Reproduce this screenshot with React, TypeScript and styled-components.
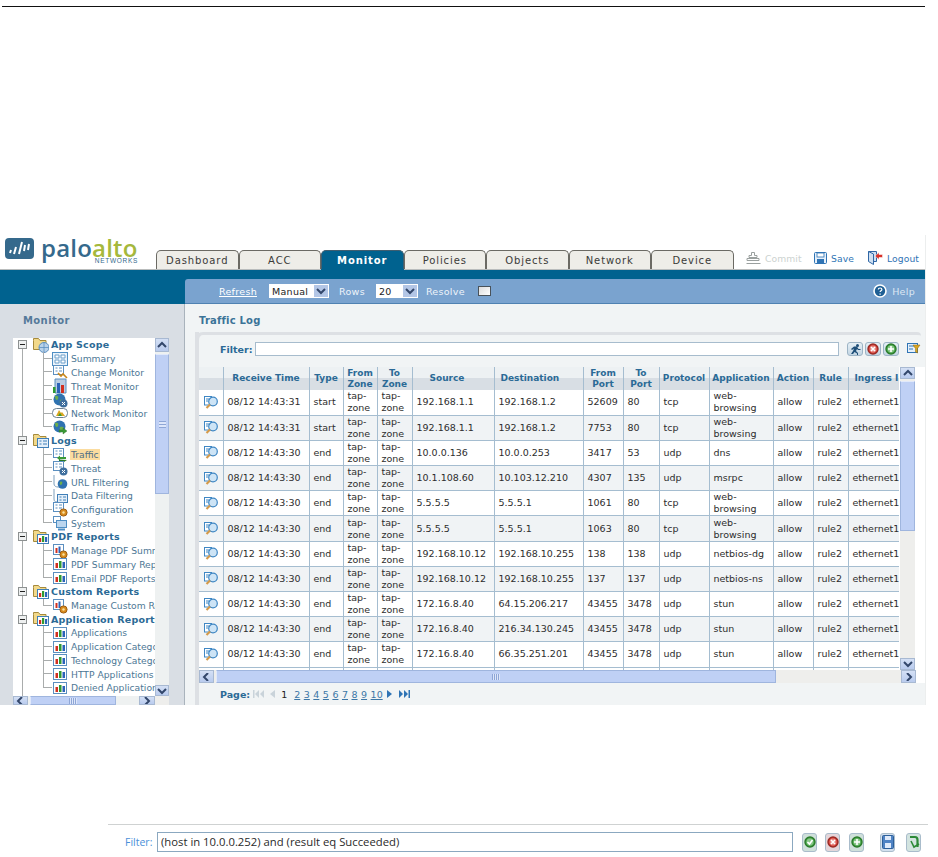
import React from 'react';
import styled, { createGlobalStyle } from 'styled-components';

const GlobalStyle = createGlobalStyle`
    html, body {
        margin: 0;
        padding: 0;
        background: #fff;
        font-family: "DejaVu Sans", Verdana, sans-serif;
    }
    #root { width: 938px; height: 857px; overflow: hidden; }
    * { box-sizing: border-box; }
`;

const Page = styled.div`
    display: flex;
    flex-direction: column;
    width: 938px;
`;

const TopRule = styled.div`
    margin: 6px 13px 0 2px;
    border-top: 1px solid #111;
`;

const Console = styled.div`
    margin-top: 228px;
    width: 926px;
    height: 470px;
    border-right: 1px solid #eceeee;
    overflow: hidden;
`;

const Masthead = styled.div`
    display: flex;
    height: 35px;
    border-bottom: 1px solid #b9bcbc;
`;

const Logo = styled.div`
    display: flex;
    width: 156px;
    padding: 3px 0 0 5px;
`;

const LogoWords = styled.div`
    display: flex;
    flex-direction: column;
    width: 97px;
    margin-left: 7px;
`;

const LogoName = styled.div`
    font-family: "Open Sans", sans-serif;
    font-size: 24px;
    font-weight: 600;
    line-height: 19px;
    letter-spacing: 0.2px;
    white-space: nowrap;
    color: #35698c;
    span { color: #a5b83c; }
`;

const LogoSub = styled.div`
    align-self: flex-end;
    font-family: "Liberation Sans", sans-serif;
    font-size: 6.5px;
    line-height: 7px;
    letter-spacing: 0.7px;
    color: #35698c;
`;

const Tabs = styled.div`
    display: flex;
    align-items: flex-end;
    width: 577px;
`;

const Tab = styled.div<{ $active?: boolean }>`
    flex: none;
    width: 82.5px;
    height: 19px;
    padding-top: 2px;
    text-align: center;
    font-size: 10px;
    line-height: 15px;
    letter-spacing: 0.9px;
    font-weight: ${p => (p.$active ? 700 : 400)};
    color: ${p => (p.$active ? '#fff' : '#3b3b38')};
    background: ${p => (p.$active ? '#00628f' : '#eeede8')};
    border: 1px solid ${p => (p.$active ? '#3f5e70' : '#6b6a64')};
    border-bottom: 0;
    border-radius: 5px 5px 0 0;
    box-shadow: ${p => (p.$active ? '0 1px 0 #00628f' : 'none')};
`;

const Actions = styled.div`
    display: flex;
    align-items: center;
    margin: 12px 0 0 13px;
    height: 22px;
`;

const ActionLink = styled.div<{ $off?: boolean; $w: number }>`
    display: flex;
    align-items: center;
    gap: 4px;
    width: ${p => p.$w}px;
    font-size: 9.2px;
    letter-spacing: 0.1px;
    white-space: nowrap;
    color: ${p => (p.$off ? '#ccd2cf' : '#2f74b5')};
`;

const IconSvg = styled.svg`
    display: block;
    flex: none;
`;

const Body = styled.div`
    display: grid;
    grid-template-columns: 185px 741px;
    height: 435px;
`;

const SideColumn = styled.div`
    display: flex;
    flex-direction: column;
`;

const SideBand = styled.div`
    height: 34px;
    background: #00628f;
`;

const Sidebar = styled.div`
    flex: 1;
    background: #d9dee4;
    border-right: 1px solid #a9b3bc;
`;

const SideTitle = styled.div`
    height: 34px;
    padding: 11px 0 0 23px;
    font-size: 10px;
    line-height: 12px;
    font-weight: 700;
    letter-spacing: 0.4px;
    color: #55799a;
`;

const TreeBox = styled.div`
    display: grid;
    grid-template-columns: 142px 14px;
    grid-template-rows: 358px 9px;
    margin-left: 13px;
    width: 156px;
    background: #eeeeec;
`;

const TreeList = styled.div`
    overflow: hidden;
    background: linear-gradient(#a9acac, #a9acac) 9px 8px / 1px 100% no-repeat #fff;
`;

const RootRow = styled.div`
    display: flex;
    align-items: center;
    height: 13.72px;
    padding-left: 5px;
    white-space: nowrap;
    font-size: 9.5px;
    font-weight: 700;
    letter-spacing: 0.2px;
    color: #2b6a96;
`;

const MinusBox = styled.div`
    display: flex;
    align-items: center;
    justify-content: center;
    flex: none;
    width: 9px;
    height: 9px;
    margin-right: 6px;
    background: #eef0f0;
    border: 1px solid #8d9191;
    &::after {
        content: '';
        width: 5px;
        height: 1px;
        background: #222;
    }
`;

const RootName = styled.span`
    margin-left: 2px;
`;

const LeafRow = styled.div<{ $last?: boolean }>`
    display: flex;
    align-items: center;
    height: 13.72px;
    margin-left: 30px;
    white-space: nowrap;
    font-size: 9.2px;
    color: #4d7795;
    border-left: 1px solid ${p => (p.$last ? 'transparent' : '#a9acac')};
`;

const LeafTick = styled.div`
    align-self: flex-start;
    flex: none;
    width: 9px;
    height: 7px;
    margin-left: -1px;
    border-left: 1px solid #a9acac;
    border-bottom: 1px solid #a9acac;
`;

const LeafName = styled.span<{ $on?: boolean }>`
    margin-left: 2px;
    padding: 0 1px;
    background: ${p => (p.$on ? '#fbdc9f' : 'transparent')};
    color: ${p => (p.$on ? '#4f6f86' : 'inherit')};
`;

const VTrack = styled.div`
    display: flex;
    flex-direction: column;
    background: #eef1f1;
`;

const HTrack = styled.div`
    display: flex;
    align-items: stretch;
    background: #eef1f1;
`;

const TrackGap = styled.div`
    flex: 1;
`;

const ScrollBtn = styled.div<{ $w: number; $h: number }>`
    display: flex;
    align-items: center;
    justify-content: center;
    flex: none;
    width: ${p => p.$w}px;
    height: ${p => p.$h}px;
    background: linear-gradient(#d4e0f5, #b9cbee);
    border: 1px solid #e8eef8;
    outline: 1px solid #a8b9d2;
    outline-offset: -1px;
`;

const VThumb = styled.div<{ $h: number }>`
    display: flex;
    align-items: center;
    justify-content: center;
    flex: none;
    height: ${p => p.$h}px;
    margin-top: 2px;
    background: #bfd0f5;
    border: 1px solid #9fb5de;
    border-top-color: #e1e9fa;
`;

const HThumb = styled.div<{ $w: number }>`
    display: flex;
    align-items: center;
    justify-content: center;
    flex: none;
    width: ${p => p.$w}px;
    margin-left: 2px;
    background: #bfd0f5;
    border: 1px solid #9fb5de;
    border-left-color: #e1e9fa;
`;

const Grip = styled.div<{ $dir: 'h' | 'v' }>`
    width: ${p => (p.$dir === 'v' ? '7px' : '8px')};
    height: ${p => (p.$dir === 'v' ? '7px' : '6px')};
    background: ${p => (p.$dir === 'v'
        ? 'repeating-linear-gradient(#8ea6d6 0 1px, #dde6fa 1px 3px)'
        : 'repeating-linear-gradient(90deg, #8ea6d6 0 1px, #dde6fa 1px 2px)')};
`;

const MainColumn = styled.div`
    display: flex;
    flex-direction: column;
    padding-top: 9px;
    background: #00628f;
    overflow: hidden;
`;

const Toolbar = styled.div`
    display: flex;
    align-items: center;
    flex: none;
    height: 25px;
    padding: 0 11px 0 34px;
    background: #7aa3cf;
    border-bottom: 1px solid #4f82b2;
    border-top-left-radius: 3px;
    font-size: 9.5px;
    letter-spacing: 0.3px;
    color: #eef4fa;
`;

const Refresh = styled.a`
    margin-right: 12px;
    color: #fff;
    text-decoration: underline;
`;

const SelectBox = styled.div<{ $w: number; $gap: number }>`
    display: flex;
    align-items: center;
    justify-content: space-between;
    width: ${p => p.$w}px;
    height: 14px;
    margin-right: ${p => p.$gap}px;
    padding-left: 3px;
    background: #fff;
    color: #222;
`;

const SelectArrow = styled.div`
    display: flex;
    align-items: center;
    justify-content: center;
    width: 14px;
    height: 12px;
    margin-right: 1px;
    background: #b3c6e6;
`;

const ToolLabel = styled.span<{ $gap: number }>`
    margin-right: ${p => p.$gap}px;
`;

const CheckBox = styled.div`
    width: 13px;
    height: 10px;
    background: linear-gradient(135deg, #dcdcdc, #fff);
    border: 1px solid #49525a;
`;

const HelpLink = styled.div`
    display: flex;
    align-items: center;
    gap: 5px;
    margin-left: auto;
    color: #dde8f3;
`;

const MainPane = styled.div`
    flex: 1;
    background: #f1f4f5;
    overflow: hidden;
`;

const PaneTitle = styled.div`
    height: 28px;
    padding: 11px 0 0 14px;
    font-size: 10px;
    line-height: 12px;
    font-weight: 700;
    letter-spacing: 0.2px;
    color: #3b7398;
`;

const Panel = styled.div`
    display: flex;
    flex-direction: column;
    height: 373px;
    margin-left: 10px;
    border-left: 4px solid #dde0e4;
`;

const PanelRim = styled.div`
    flex: none;
    height: 10px;
    margin: 0 5px 0 -4px;
    border-top: 3px solid #dde0e4;
    border-left: 4px solid #dde0e4;
    border-top-left-radius: 8px;
    border-top-right-radius: 4px;
`;

const FilterRow = styled.div`
    display: flex;
    align-items: center;
    flex: none;
    height: 14px;
    margin-bottom: 11px;
    padding-left: 21px;
    font-size: 9.5px;
    font-weight: 700;
    color: #2b6a96;
`;

const FilterField = styled.div`
    flex: none;
    width: 584px;
    height: 14px;
    margin: 0 8px 0 3px;
    background: #fff;
    border: 1px solid #a7bccd;
`;

const FilterBtn = styled.div`
    display: flex;
    align-items: center;
    justify-content: center;
    flex: none;
    width: 16px;
    height: 14px;
    margin-right: 2px;
    background: linear-gradient(#e6f0f6, #c3d6e4);
    border: 1px solid #9db4c5;
    border-radius: 3px;
`;

const FilterTail = styled.div`
    flex: none;
    margin-left: 6px;
`;

const TableBlock = styled.div`
    display: flex;
    flex: none;
    height: 303px;
    background: #fff;
`;

const TableClip = styled.div`
    flex: none;
    width: 700px;
    margin-right: 1px;
    overflow: hidden;
`;

const LogTable = styled.table`
    table-layout: fixed;
    width: 700px;
    border-collapse: collapse;
    font-size: 9.5px;
    color: #2d2d2d;
`;

const HeadCell = styled.th<{ $pad?: number }>`
    height: 23px;
    padding: 0 0 0 ${p => p.$pad ?? 0}px;
    overflow: hidden;
    white-space: nowrap;
    text-align: ${p => (p.$pad ? 'left' : 'center')};
    font-size: 9px;
    line-height: 11px;
    font-weight: 700;
    color: #2b6a96;
    background: linear-gradient(#edf1f3 0 50%, #d8dee4 50% 100%);
    border-right: 1px solid #a5bdd0;
`;

const Row = styled.tr<{ $alt?: boolean }>`
    height: 25.2px;
    background: ${p => (p.$alt ? '#f0f3f5' : '#fff')};
    border-bottom: 1px solid #a5bdd0;
`;

const Cell = styled.td<{ $clip?: boolean }>`
    padding: 0 0 0 4px;
    overflow: hidden;
    line-height: 12px;
    white-space: ${p => (p.$clip ? 'nowrap' : 'normal')};
    border-right: 1px solid #a5bdd0;
`;

const IconCell = styled.td`
    padding: 0 0 0 5px;
    border-right: 1px solid #a5bdd0;
    line-height: 0;
`;

const VScroll = styled(VTrack)`
    flex: none;
    width: 15px;
    background: #eeeeec;
`;

const HScrollRow = styled.div`
    display: flex;
    flex: none;
    height: 13px;
`;

const HScroll = styled(HTrack)`
    width: 717px;
    background: #eeeeec;
`;

const HRest = styled.div`
    flex: 1;
    background: #fff;
`;

const Pager = styled.div`
    display: flex;
    align-items: center;
    height: 22px;
    padding-left: 21px;
    font-size: 9.5px;
`;

const PagerLabel = styled.span`
    margin-right: 3px;
    font-weight: 700;
    color: #2b6a96;
`;

const PageNum = styled.a<{ $on?: boolean }>`
    margin-right: ${p => (p.$on ? '7px' : '3.5px')};
    color: ${p => (p.$on ? '#222' : '#3c76a6')};
    text-decoration: ${p => (p.$on ? 'none' : 'underline')};
`;

const PagerGlyph = styled.span<{ $gap: number }>`
    display: flex;
    margin-right: ${p => p.$gap}px;
`;

const BottomRule = styled.div`
    margin: 119px 10px 0 108px;
    border-top: 1px solid #cfd2d2;
`;

const QueryBar = styled.div`
    display: flex;
    align-items: center;
    margin: 7px 0 0 125px;
    height: 20px;
    font-family: "Open Sans", sans-serif;
    font-size: 10.5px;
`;

const QueryLabel = styled.span`
    width: 32px;
    color: #4a90d9;
`;

const QueryField = styled.div`
    flex: none;
    width: 636px;
    height: 20px;
    padding: 0 3px;
    line-height: 18px;
    font-size: 11.3px;
    color: #2a2a2a;
    white-space: nowrap;
    background: #fff;
    border: 1px solid #8ba8c0;
`;

const QueryBtn = styled.div<{ $gap: number; $bg: string }>`
    display: flex;
    align-items: center;
    justify-content: center;
    flex: none;
    width: 15px;
    height: 19px;
    margin-left: ${p => p.$gap}px;
    background: ${p => p.$bg};
    border: 1px solid #a9bccb;
    border-radius: 3px;
`;

type Chevron = 'up' | 'down' | 'left' | 'right';

const chevrons: Record<Chevron, string> = {
    up: 'M1 6 L5 2 L9 6',
    down: 'M1 2 L5 6 L9 2',
    left: 'M6 0 L2 4 L6 8',
    right: 'M3 0 L7 4 L3 8',
};

const Arrow = ({ dir }: { dir: Chevron }) => (
    <svg width="10" height="8" viewBox="0 0 10 8" fill="none" stroke="#33476b" strokeWidth="2">
        <path d={chevrons[dir]} />
    </svg>
);

const Mark = () => (
    <svg width="29" height="21" viewBox="0 0 29 21">
        <rect width="29" height="21" rx="4" fill="#35698c" />
        <path d="M5 15l1-3M9 16l2-7M14 16l3-12M19 13l1-6M23 12l1-6" stroke="#fff" strokeWidth="2" />
    </svg>
);

const bars = (
    <>
        <rect x="1.5" y="2.5" width="13" height="11" fill="#fff" stroke="#5b8fc0" />
        <rect x="3.5" y="7" width="2.5" height="5" fill="#d23020" />
        <rect x="7" y="5" width="2.5" height="7" fill="#2f9a32" />
        <rect x="10.5" y="6" width="2.5" height="6" fill="#2c62b8" />
    </>
);

const docLines = (
    <>
        <rect x="1.5" y="1.5" width="10" height="9" fill="#fff" stroke="#5b8fc0" />
        <path d="M3.5 4h2M7 4h3M3.5 7h2M7 7h3" stroke="#5b8fc0" />
    </>
);

const globe = (
    <>
        <circle cx="7.5" cy="7.5" r="6" fill="#2f72b0" />
        <path d="M3 4c3-1 4 1 3 3s-3 1-3-3zM8 8c3-1 5 1 3 3s-4 1-3-3z" fill="#6cae4c" />
    </>
);

const xBadge = (
    <>
        <circle cx="11.5" cy="11.5" r="4" fill="#3f6f9e" />
        <path d="M10 10l3 3M13 10l-3 3" stroke="#fff" />
    </>
);

const gear = (
    <>
        <circle cx="11.5" cy="11.5" r="3.6" fill="#d98c1e" stroke="#9c5c10" />
        <circle cx="11.5" cy="11.5" r="1.2" fill="#fbe2a0" />
    </>
);

const greenArrow = <path d="M7 11h4V9l4 3-4 3v-2H7z" fill="#3a9a35" stroke="#2a6a28" strokeWidth="0.4" />;

const treeIcons: Record<string, React.ReactNode> = {
    summary: (
        <>
            <rect x="0.5" y="1.5" width="15" height="13" fill="#eaf3fb" stroke="#4f8fc4" />
            <path d="M3 4h4v3H3zM9 4h4v3H9zM3 9h4v3H3zM9 9h4v3H9z" fill="#fff" stroke="#6c9fca" />
        </>
    ),
    change: (
        <>
            {docLines}
            <path d="M6 9l3 3 2-2 4 4" fill="none" stroke="#c98618" strokeWidth="1.6" />
        </>
    ),
    threat: (
        <>
            <path d="M3 1h11v14H3z" fill="#b9cde2" stroke="#5b8fc0" />
            <rect x="1" y="9" width="2.5" height="6" fill="#2f9a32" />
            <rect x="5" y="5" width="3" height="10" fill="#2c62b8" />
            <rect x="9" y="7" width="3" height="8" fill="#d23020" />
        </>
    ),
    globeX: (
        <>
            {globe}
            {xBadge}
        </>
    ),
    network: (
        <>
            <rect x="0.5" y="3.5" width="15" height="9" rx="4" fill="#fff" stroke="#6a7f90" />
            <path d="M4 11l3-6 2 3 1-1 3 4z" fill="#d9a520" />
            <path d="M6 11l2-3 2 3z" fill="#3a9a35" />
        </>
    ),
    globeGo: (
        <>
            {globe}
            {greenArrow}
        </>
    ),
    traffic: (
        <>
            {docLines}
            <path d="M5 11l3-2.5v1.5h6v2H8v1.5z" fill="#3a9a35" />
            <path d="M15 13l-3 2v-1H7v-1.5" fill="#2a7a28" />
        </>
    ),
    docX: (
        <>
            {docLines}
            {xBadge}
        </>
    ),
    url: (
        <>
            <path d="M2 1v9c0 2 2 3 4 3h2" fill="#fff" stroke="#7d9fbd" />
            <circle cx="10.5" cy="10" r="4.8" fill="#2f72b0" />
            <path d="M8 8c2-1 3 0 2 2s-3 1-2-2z" fill="#6cae4c" />
        </>
    ),
    data: (
        <>
            <path d="M2 1v10c0 2 1 3 3 3" fill="none" stroke="#7d9fbd" />
            <rect x="5.5" y="6.5" width="10" height="8" fill="#e4eff9" stroke="#3f7fb8" />
            <path d="M7.5 9h2M11 9h3M7.5 12h2M11 12h3" stroke="#3f7fb8" />
        </>
    ),
    config: (
        <>
            {docLines}
            {gear}
        </>
    ),
    system: (
        <>
            <rect x="1.5" y="1.5" width="7" height="6" fill="#fff" stroke="#5b8fc0" />
            <rect x="4.5" y="5.5" width="10" height="7" fill="#bcd6ee" stroke="#4f8fc4" />
            <path d="M6 14.5h7" stroke="#4f8fc4" strokeWidth="2" />
        </>
    ),
    manage: (
        <>
            <rect x="1.5" y="1.5" width="10" height="10" fill="#fff" stroke="#5b8fc0" />
            <rect x="3.5" y="5" width="2" height="5" fill="#d23020" />
            <rect x="6.5" y="3.5" width="2" height="6.5" fill="#2c62b8" />
            {gear}
        </>
    ),
    bars,
};

const TreeIcon = ({ kind }: { kind: string }) => (
    <IconSvg width="16" height="16" viewBox="0 0 16 16">
        {treeIcons[kind]}
    </IconSvg>
);

const folderBadges: Record<string, React.ReactNode> = {
    scope: (
        <>
            <circle cx="11" cy="10.5" r="5" fill="#b9d2ea" stroke="#5b8fc0" />
            <path d="M6 10.5h10M11 5.5v10" stroke="#5b8fc0" strokeWidth="0.8" />
        </>
    ),
    logs: (
        <>
            <rect x="4.5" y="5.5" width="11" height="9" fill="#e4eff9" stroke="#3f7fb8" />
            <path d="M6.5 8h2M10 8h4M6.5 11h2M10 11h4" stroke="#3f7fb8" />
        </>
    ),
    report: (
        <>
            <rect x="4.5" y="5.5" width="11" height="9" fill="#fff" stroke="#3f7fb8" />
            <rect x="6" y="9" width="2.2" height="4" fill="#d23020" />
            <rect x="9" y="7" width="2.2" height="6" fill="#2f9a32" />
            <rect x="12" y="8" width="2.2" height="5" fill="#2c62b8" />
        </>
    ),
};

const FolderIcon = ({ badge }: { badge: string }) => (
    <IconSvg width="16" height="16" viewBox="0 0 16 16">
        <path d="M0.5 3.5V1.5h5l1.5 2h6v9h-12.5z" fill="#f2d98a" stroke="#a68a3c" />
        {folderBadges[badge]}
    </IconSvg>
);

const DetailIcon = () => (
    <svg width="15" height="13" viewBox="0 0 15 13">
        <rect x="0.5" y="0.5" width="7" height="8.5" fill="#fff" stroke="#3f87c4" />
        <path d="M2 3h3M2 5h2" stroke="#3f87c4" />
        <circle cx="9" cy="5.5" r="4.3" fill="#cde4f6" stroke="#3f87c4" strokeWidth="1.2" />
        <path d="M6 8.5L2.5 12" stroke="#d49a4a" strokeWidth="2.2" />
    </svg>
);

const Commit = () => (
    <IconSvg width="15" height="13" viewBox="0 0 15 13" fill="none" stroke="#9aa09f">
        <path d="M5.5 0.5h3v3h2.5v2H3v-2h2.5zM1 6.5h12v2H1zM0.5 11.5h14" />
    </IconSvg>
);

const Save = () => (
    <IconSvg width="13" height="12" viewBox="0 0 13 12">
        <rect x="0.5" y="0.5" width="12" height="11" rx="1" fill="#e6f0fa" stroke="#2f74b5" />
        <rect x="3" y="1" width="7" height="4" fill="#fff" stroke="#2f74b5" strokeWidth="0.8" />
        <rect x="3" y="7" width="7" height="4" fill="#2f74b5" />
    </IconSvg>
);

const Logout = () => (
    <IconSvg width="15" height="14" viewBox="0 0 15 14">
        <path d="M0.5 0.5h8v10h-3v3l-5-3z" fill="#cfe0f2" stroke="#2f66a5" />
        <path d="M5.5 13V3l-5-2.5" fill="none" stroke="#2f66a5" />
        <path d="M14.5 3.5H11V1.5L7 5l4 3.5V6.5h3.5z" fill="#d8312a" stroke="#fff" strokeWidth="0.5" />
    </IconSvg>
);

const HelpDot = () => (
    <svg width="14" height="14" viewBox="0 0 14 14">
        <circle cx="7" cy="7" r="6" fill="#1f5f94" stroke="#fff" strokeWidth="1.6" />
        <path d="M5.3 5.5c0-2 3.6-2 3.6 0 0 1.3-1.8 1.2-1.8 2.6M7.1 9.5v1.2" fill="none" stroke="#fff" strokeWidth="1.2" />
    </svg>
);

const Runner = () => (
    <svg width="11" height="11" viewBox="0 0 11 11" fill="#1e4f78">
        <circle cx="7.5" cy="1.5" r="1.5" />
        <path d="M1 5l3-2.5h3l1.5 2.5H10.5v1H8L7 5 6 7l2 2v2H7V9.500L4.500 8 3 10H1l2-3 1-2.500-2 1.500z" />
    </svg>
);

const RoundGlyph = ({ fill, ring, path }: { fill: string; ring: string; path: string }) => (
    <svg width="12" height="12" viewBox="0 0 12 12">
        <circle cx="6" cy="6" r="5" fill={fill} stroke={ring} strokeWidth="1.4" />
        <circle cx="6" cy="6" r="3.4" fill="#fff" fillOpacity="0.35" />
        <path d={path} fill="none" stroke="#fff" strokeWidth="1.6" />
    </svg>
);

const crossPath = 'M4 4l4 4M8 4l-4 4';
const plusPath = 'M6 3v6M3 6h6';
const tickPath = 'M3.5 6l2 2 3-4';

const FilterMenu = () => (
    <svg width="18" height="12" viewBox="0 0 18 12">
        <rect x="0.5" y="1.5" width="10" height="9" fill="#e6f0fa" stroke="#2f74b5" />
        <path d="M2 4h7M2 7h4" stroke="#2f74b5" />
        <path d="M6 3h7l-2.5 3.5V11L8.5 10V6.5z" fill="#d9a520" stroke="#8d6a12" strokeWidth="0.5" />
    </svg>
);

const FloppySmall = () => (
    <svg width="12" height="14" viewBox="0 0 12 14">
        <rect x="0.5" y="0.5" width="11" height="13" rx="1" fill="#4f83c4" stroke="#2c5f99" />
        <rect x="3" y="1" width="6" height="4" fill="#dfeafa" />
        <rect x="3" y="8" width="6" height="5" fill="#dfeafa" />
    </svg>
);

const LoadArrow = () => (
    <svg width="12" height="14" viewBox="0 0 12 14" fill="none" stroke="#2d8a38" strokeWidth="2.2">
        <path d="M2 2h5c2 0 2.5 1.5 2.5 3v7" />
        <path d="M3 6l3 6 5-3" strokeWidth="1.6" />
    </svg>
);

const PagerIcon = ({ d, color }: { d: string; color: string }) => (
    <svg width="11" height="8" viewBox="0 0 11 8" fill={color}>
        <path d={d} />
    </svg>
);

const firstPage = 'M0 0h1.5v8H0zM6 0v8L2 4zM11 0v8L7 4z';
const prevPage = 'M6 0v8L1 4z';
const nextPage = 'M1 0v8l5-4z';
const lastPage = 'M0 0v8l4-4zM5 0v8l4-4zM9.5 0H11v8H9.5z';

const treeData = [
    { name: 'App Scope', badge: 'scope', items: [['Summary', 'summary'], ['Change Monitor', 'change'], ['Threat Monitor', 'threat'], ['Threat Map', 'globeX'], ['Network Monitor', 'network'], ['Traffic Map', 'globeGo']] },
    { name: 'Logs', badge: 'logs', items: [['Traffic', 'traffic'], ['Threat', 'docX'], ['URL Filtering', 'url'], ['Data Filtering', 'data'], ['Configuration', 'config'], ['System', 'system']] },
    { name: 'PDF Reports', badge: 'report', items: [['Manage PDF Summary', 'manage'], ['PDF Summary Reports', 'bars'], ['Email PDF Reports', 'bars']] },
    { name: 'Custom Reports', badge: 'report', items: [['Manage Custom Reports', 'manage']] },
    { name: 'Application Reports', badge: 'report', items: [['Applications', 'bars'], ['Application Categories', 'bars'], ['Technology Categories', 'bars'], ['HTTP Applications', 'bars'], ['Denied Applications', 'bars']] },
];

const columns: { label: string | string[]; width: number; pad?: number }[] = [
    { label: '', width: 24 },
    { label: 'Receive Time', width: 86 },
    { label: 'Type', width: 34 },
    { label: ['From', 'Zone'], width: 34 },
    { label: ['To', 'Zone'], width: 35 },
    { label: 'Source', width: 82, pad: 17 },
    { label: 'Destination', width: 89, pad: 6 },
    { label: ['From', 'Port'], width: 40 },
    { label: ['To', 'Port'], width: 36 },
    { label: 'Protocol', width: 50 },
    { label: 'Application', width: 64 },
    { label: 'Action', width: 40 },
    { label: 'Rule', width: 35 },
    { label: 'Ingress Interface', width: 51, pad: 6 },
];

const logRows = [
    ['31', 'start', '192.168.1.1', '192.168.1.2', '52609', '80', 'tcp', 'web-browsing'],
    ['31', 'start', '192.168.1.1', '192.168.1.2', '7753', '80', 'tcp', 'web-browsing'],
    ['30', 'end', '10.0.0.136', '10.0.0.253', '3417', '53', 'udp', 'dns'],
    ['30', 'end', '10.1.108.60', '10.103.12.210', '4307', '135', 'udp', 'msrpc'],
    ['30', 'end', '5.5.5.5', '5.5.5.1', '1061', '80', 'tcp', 'web-browsing'],
    ['30', 'end', '5.5.5.5', '5.5.5.1', '1063', '80', 'tcp', 'web-browsing'],
    ['30', 'end', '192.168.10.12', '192.168.10.255', '138', '138', 'udp', 'netbios-dg'],
    ['30', 'end', '192.168.10.12', '192.168.10.255', '137', '137', 'udp', 'netbios-ns'],
    ['30', 'end', '172.16.8.40', '64.15.206.217', '43455', '3478', 'udp', 'stun'],
    ['30', 'end', '172.16.8.40', '216.34.130.245', '43455', '3478', 'udp', 'stun'],
    ['30', 'end', '172.16.8.40', '66.35.251.201', '43455', '3478', 'udp', 'stun'],
];

const tabNames = ['Dashboard', 'ACC', 'Monitor', 'Policies', 'Objects', 'Network', 'Device'];
const pageNums = ['2', '3', '4', '5', '6', '7', '8', '9', '10'];

const App: React.FC = () => (
    <Page>
        <GlobalStyle />
        <TopRule />
        <Console>
            <Masthead>
                <Logo>
                    <Mark />
                    <LogoWords>
                        <LogoName>palo<span>alto</span></LogoName>
                        <LogoSub>NETWORKS</LogoSub>
                    </LogoWords>
                </Logo>
                <Tabs>
                    {tabNames.map(name => (
                        <Tab key={name} $active={name === 'Monitor'}>{name}</Tab>
                    ))}
                </Tabs>
                <Actions>
                    <ActionLink $off $w={68}><Commit />Commit</ActionLink>
                    <ActionLink $w={54}><Save />Save</ActionLink>
                    <ActionLink $w={52}><Logout />Logout</ActionLink>
                </Actions>
            </Masthead>
            <Body>
                <SideColumn>
                    <SideBand />
                    <Sidebar>
                        <SideTitle>Monitor</SideTitle>
                        <TreeBox>
                            <TreeList>
                                {treeData.map(group => (
                                    <div key={group.name}>
                                        <RootRow>
                                            <MinusBox />
                                            <FolderIcon badge={group.badge} />
                                            <RootName>{group.name}</RootName>
                                        </RootRow>
                                        {group.items.map(([name, icon], i) => (
                                            <LeafRow key={name} $last={i === group.items.length - 1}>
                                                <LeafTick />
                                                <TreeIcon kind={icon} />
                                                <LeafName $on={name === 'Traffic'}>{name}</LeafName>
                                            </LeafRow>
                                        ))}
                                    </div>
                                ))}
                            </TreeList>
                            <VTrack>
                                <ScrollBtn $w={14} $h={14}><Arrow dir="up" /></ScrollBtn>
                                <VThumb $h={140}><Grip $dir="v" /></VThumb>
                                <TrackGap />
                                <ScrollBtn $w={14} $h={11}><Arrow dir="down" /></ScrollBtn>
                            </VTrack>
                            <HTrack>
                                <ScrollBtn $w={15} $h={9}><Arrow dir="left" /></ScrollBtn>
                                <HThumb $w={86}><Grip $dir="h" /></HThumb>
                                <TrackGap />
                                <ScrollBtn $w={16} $h={9}><Arrow dir="right" /></ScrollBtn>
                            </HTrack>
                            <div />
                        </TreeBox>
                    </Sidebar>
                </SideColumn>
                <MainColumn>
                    <Toolbar>
                        <Refresh>Refresh</Refresh>
                        <SelectBox $w={60} $gap={10}>Manual<SelectArrow><Arrow dir="down" /></SelectArrow></SelectBox>
                        <ToolLabel $gap={11}>Rows</ToolLabel>
                        <SelectBox $w={42} $gap={8}>20<SelectArrow><Arrow dir="down" /></SelectArrow></SelectBox>
                        <ToolLabel $gap={13}>Resolve</ToolLabel>
                        <CheckBox />
                        <HelpLink><HelpDot />Help</HelpLink>
                    </Toolbar>
                    <MainPane>
                        <PaneTitle>Traffic Log</PaneTitle>
                        <Panel>
                            <PanelRim />
                            <FilterRow>
                                Filter:
                                <FilterField />
                                <FilterBtn><Runner /></FilterBtn>
                                <FilterBtn><RoundGlyph fill="#d8423a" ring="#9a2a24" path={crossPath} /></FilterBtn>
                                <FilterBtn><RoundGlyph fill="#4aa84a" ring="#2a7a2a" path={plusPath} /></FilterBtn>
                                <FilterTail><FilterMenu /></FilterTail>
                            </FilterRow>
                            <TableBlock>
                                <TableClip>
                                    <LogTable>
                                        <colgroup>
                                            {columns.map((c, i) => <col key={i} width={c.width} />)}
                                        </colgroup>
                                        <thead>
                                            <tr>
                                                {columns.map((c, i) => (
                                                    <HeadCell key={i} $pad={c.pad}>
                                                        {Array.isArray(c.label)
                                                            ? <>{c.label[0]}<br />{c.label[1]}</>
                                                            : c.label}
                                                    </HeadCell>
                                                ))}
                                            </tr>
                                        </thead>
                                        <tbody>
                                            {logRows.map((r, i) => (
                                                <Row key={i} $alt={i % 2 === 1}>
                                                    <IconCell><DetailIcon /></IconCell>
                                                    <Cell $clip>08/12 14:43:{r[0]}</Cell>
                                                    <Cell>{r[1]}</Cell>
                                                    <Cell>tap-zone</Cell>
                                                    <Cell>tap-zone</Cell>
                                                    <Cell $clip>{r[2]}</Cell>
                                                    <Cell $clip>{r[3]}</Cell>
                                                    <Cell>{r[4]}</Cell>
                                                    <Cell>{r[5]}</Cell>
                                                    <Cell>{r[6]}</Cell>
                                                    <Cell>{r[7]}</Cell>
                                                    <Cell>allow</Cell>
                                                    <Cell>rule2</Cell>
                                                    <Cell $clip>ethernet1</Cell>
                                                </Row>
                                            ))}
                                            <Row>
                                                {columns.map((c, i) => <Cell key={i} />)}
                                            </Row>
                                        </tbody>
                                    </LogTable>
                                </TableClip>
                                <VScroll>
                                    <ScrollBtn $w={15} $h={12}><Arrow dir="up" /></ScrollBtn>
                                    <VThumb $h={150} />
                                    <TrackGap />
                                    <ScrollBtn $w={15} $h={12}><Arrow dir="down" /></ScrollBtn>
                                </VScroll>
                            </TableBlock>
                            <HScrollRow>
                                <HScroll>
                                    <ScrollBtn $w={15} $h={13}><Arrow dir="left" /></ScrollBtn>
                                    <HThumb $w={560}><Grip $dir="h" /></HThumb>
                                    <TrackGap />
                                    <ScrollBtn $w={15} $h={13}><Arrow dir="right" /></ScrollBtn>
                                </HScroll>
                                <HRest />
                            </HScrollRow>
                            <Pager>
                                <PagerLabel>Page:</PagerLabel>
                                <PagerGlyph $gap={5}><PagerIcon d={firstPage} color="#c9d3da" /></PagerGlyph>
                                <PagerGlyph $gap={1}><PagerIcon d={prevPage} color="#c9d3da" /></PagerGlyph>
                                <PageNum $on>1</PageNum>
                                {pageNums.map(n => <PageNum key={n}>{n}</PageNum>)}
                                <PagerGlyph $gap={2}><PagerIcon d={nextPage} color="#2f74b5" /></PagerGlyph>
                                <PagerGlyph $gap={0}><PagerIcon d={lastPage} color="#2f74b5" /></PagerGlyph>
                            </Pager>
                        </Panel>
                    </MainPane>
                </MainColumn>
            </Body>
        </Console>
        <BottomRule />
        <QueryBar>
            <QueryLabel>Filter:</QueryLabel>
            <QueryField>(host in 10.0.0.252) and (result eq Succeeded)</QueryField>
            <QueryBtn $gap={9} $bg="#cfe0da"><RoundGlyph fill="#4aa84a" ring="#2a7a2a" path={tickPath} /></QueryBtn>
            <QueryBtn $gap={8} $bg="#e4d6da"><RoundGlyph fill="#d8423a" ring="#9a2a24" path={crossPath} /></QueryBtn>
            <QueryBtn $gap={9} $bg="#cfe0da"><RoundGlyph fill="#4aa84a" ring="#2a7a2a" path={plusPath} /></QueryBtn>
            <QueryBtn $gap={16} $bg="#d3e0ee"><FloppySmall /></QueryBtn>
            <QueryBtn $gap={11} $bg="#d3e4e0"><LoadArrow /></QueryBtn>
        </QueryBar>
    </Page>
);

export default App;
